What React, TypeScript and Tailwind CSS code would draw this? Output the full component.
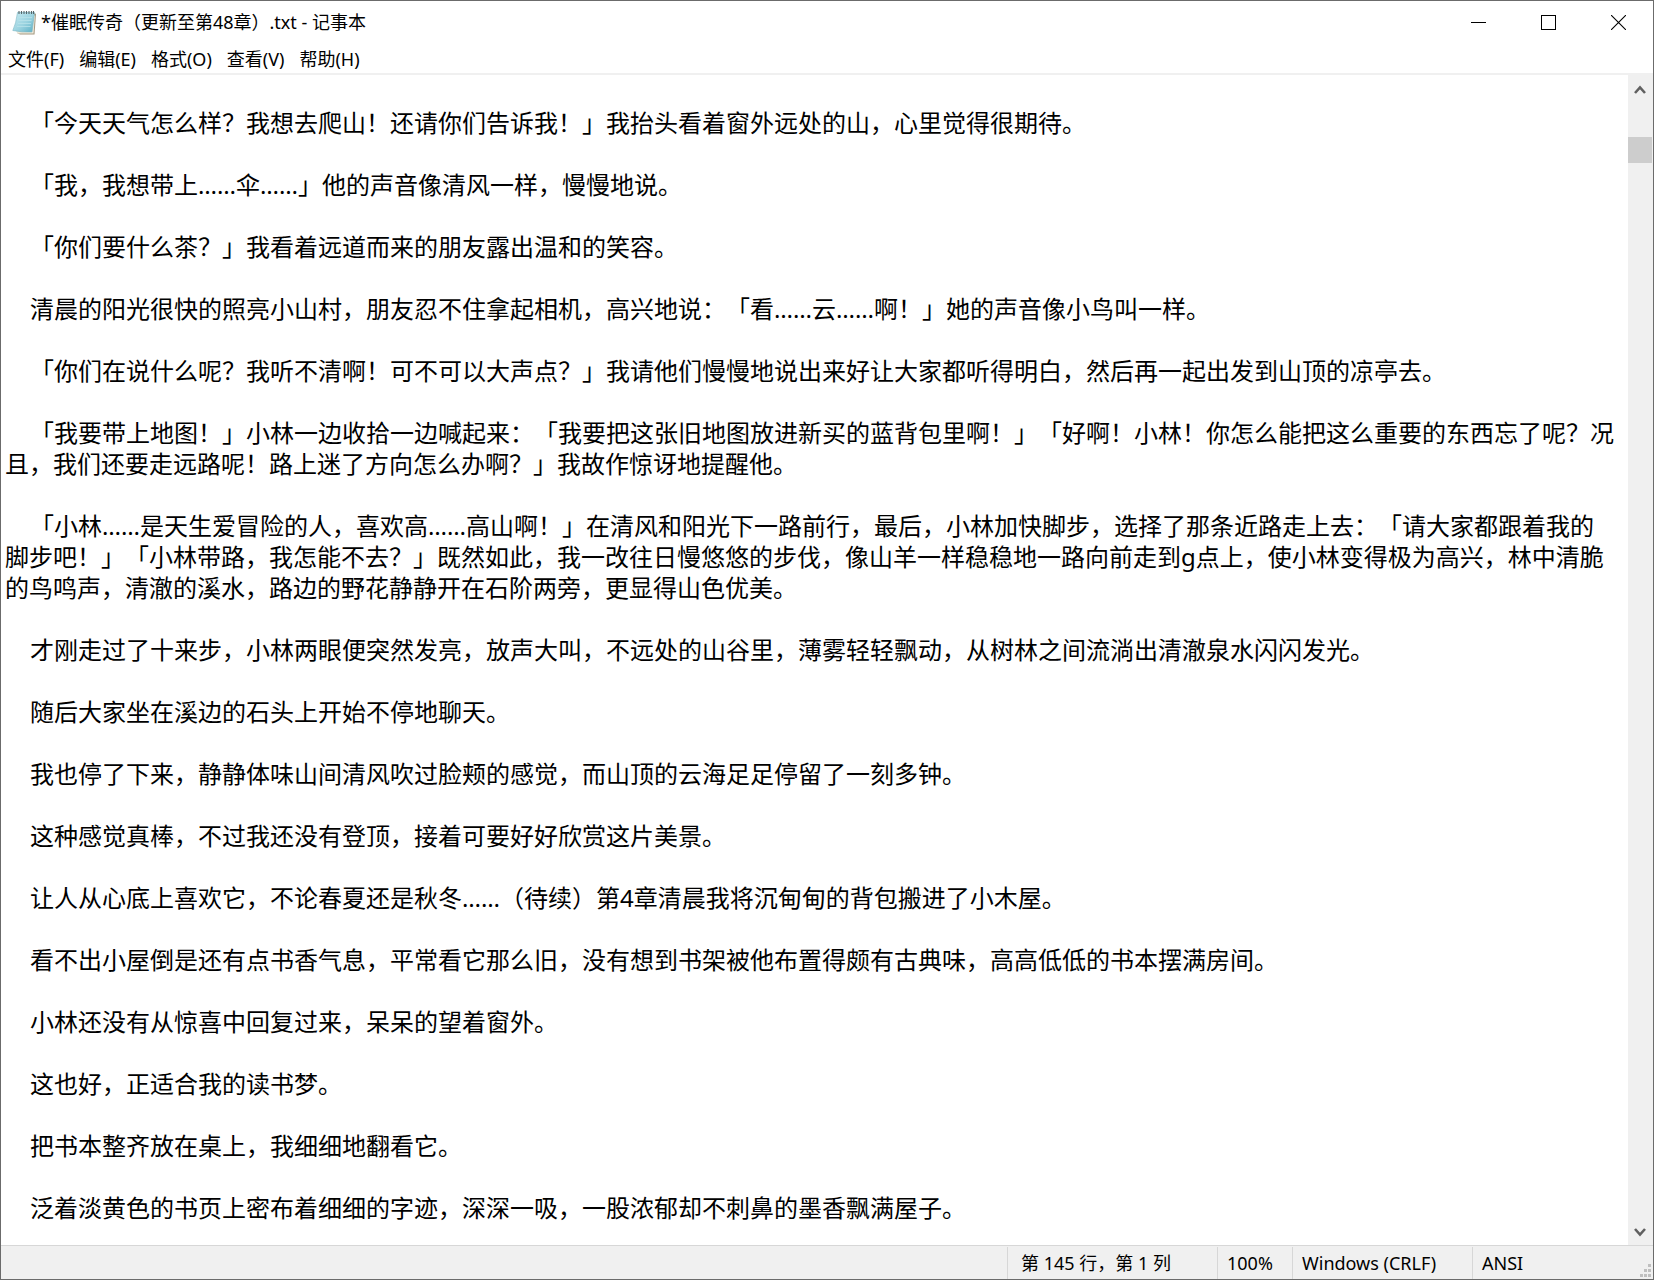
import React from "react";

const paragraphs = [
  "「今天天气怎么样？我想去爬山！还请你们告诉我！」我抬头看着窗外远处的山，心里觉得很期待。",
  "「我，我想带上……伞……」他的声音像清风一样，慢慢地说。",
  "「你们要什么茶？」我看着远道而来的朋友露出温和的笑容。",
  "清晨的阳光很快的照亮小山村，朋友忍不住拿起相机，高兴地说：「看……云……啊！」她的声音像小鸟叫一样。",
  "「你们在说什么呢？我听不清啊！可不可以大声点？」我请他们慢慢地说出来好让大家都听得明白，然后再一起出发到山顶的凉亭去。",
  "「我要带上地图！」小林一边收拾一边喊起来：「我要把这张旧地图放进新买的蓝背包里啊！」「好啊！小林！你怎么能把这么重要的东西忘了呢？况且，我们还要走远路呢！路上迷了方向怎么办啊？」我故作惊讶地提醒他。",
  "「小林……是天生爱冒险的人，喜欢高……高山啊！」在清风和阳光下一路前行，最后，小林加快脚步，选择了那条近路走上去：「请大家都跟着我的脚步吧！」「小林带路，我怎能不去？」既然如此，我一改往日慢悠悠的步伐，像山羊一样稳稳地一路向前走到g点上，使小林变得极为高兴，林中清脆的鸟鸣声，清澈的溪水，路边的野花静静开在石阶两旁，更显得山色优美。",
  "才刚走过了十来步，小林两眼便突然发亮，放声大叫，不远处的山谷里，薄雾轻轻飘动，从树林之间流淌出清澈泉水闪闪发光。",
  "随后大家坐在溪边的石头上开始不停地聊天。",
  "我也停了下来，静静体味山间清风吹过脸颊的感觉，而山顶的云海足足停留了一刻多钟。",
  "这种感觉真棒，不过我还没有登顶，接着可要好好欣赏这片美景。",
  "让人从心底上喜欢它，不论春夏还是秋冬……（待续）第4章清晨我将沉甸甸的背包搬进了小木屋。",
  "看不出小屋倒是还有点书香气息，平常看它那么旧，没有想到书架被他布置得颇有古典味，高高低低的书本摆满房间。",
  "小林还没有从惊喜中回复过来，呆呆的望着窗外。",
  "这也好，正适合我的读书梦。",
  "把书本整齐放在桌上，我细细地翻看它。",
  "泛着淡黄色的书页上密布着细细的字迹，深深一吸，一股浓郁却不刺鼻的墨香飘满屋子。",
];

const documentText = "\n" + paragraphs.map((p) => "    " + p).join("\n\n");

const menus = ["文件(F)", "编辑(E)", "格式(O)", "查看(V)", "帮助(H)"];

function NotepadIcon() {
  return (
    <svg width="25" height="26" viewBox="0 0 25 26" aria-hidden="true">
      <defs>
        <linearGradient id="cover" x1="0" y1="0" x2="1" y2="1">
          <stop offset="0" stopColor="#c9ebf2" />
          <stop offset="0.55" stopColor="#9bd3e0" />
          <stop offset="1" stopColor="#5aaec4" />
        </linearGradient>
      </defs>
      <path d="M5 23 L8 24.5 H22.5 L24 4 L22.5 3 Z" fill="#a59a83" />
      <path d="M4 21.5 L6 23.5 H21.5 L23 5 Z" fill="#efe9da" />
      <path d="M5.5 2.5 H22.5 L20 22 Q10 22.5 0.8 20.5 Q4 14 5.5 2.5 Z" fill="url(#cover)" stroke="#78b5c3" strokeWidth="0.6" />
      <path d="M7 7.5H20M6.5 10.5H19.5M6 13.5H19M5 16.5H18.5" stroke="#b9e2ea" strokeWidth="0.8" />
      <path d="M7 1V4M9.5 1V4M12 1V4M14.500 1V4M17 1V4M19.500 1V4M21.500 1V4" stroke="#56666b" strokeWidth="1.1" />
    </svg>
  );
}

export default function App() {
  return (
    <div
      lang="zh-CN"
      className="flex h-screen flex-col overflow-hidden border border-[#6b6b6b] bg-white font-['Noto_Sans','Noto_Sans_CJK_SC',sans-serif] text-black [text-spacing-trim:space-all]"
    >
      <header className="flex h-[43px] shrink-0 items-center">
        <div className="flex min-w-0 flex-1 items-center gap-1 pl-[11px]">
          <NotepadIcon />
          <h1 className="truncate pb-px text-[18px] leading-6">*催眠传奇（更新至第48章）.txt - 记事本</h1>
        </div>
        <div className="flex h-full shrink-0">
          <button aria-label="最小化" className="flex w-[70px] items-center justify-center">
            <svg width="15" height="15" viewBox="0 0 15 15" shapeRendering="crispEdges">
              <path d="M0 7.500H15" stroke="black" />
            </svg>
          </button>
          <button aria-label="最大化" className="flex w-[70px] items-center justify-center">
            <svg width="15" height="15" viewBox="0 0 15 15" shapeRendering="crispEdges">
              <rect x="0.500" y="0.500" width="14" height="14" fill="none" stroke="black" />
            </svg>
          </button>
          <button aria-label="关闭" className="flex w-[70px] items-center justify-center">
            <svg width="15" height="15" viewBox="0 0 15 15">
              <path d="M0 0L15 15M15 0L0 15" stroke="black" strokeWidth="1.1" />
            </svg>
          </button>
        </div>
      </header>

      <nav className="flex h-[31px] shrink-0 items-center gap-[15px] border-b-2 border-[#f0f0f0] pl-[7px]">
        {menus.map((m) => (
          <button key={m} className="text-[18px] leading-6">
            {m}
          </button>
        ))}
      </nav>

      <main className="flex min-h-0 flex-1">
        <textarea
          aria-label="文本编辑器"
          spellCheck={false}
          defaultValue={documentText}
          className="min-w-0 flex-1 resize-none overflow-hidden border-0 bg-white pt-px pr-3 pl-1 text-[24px] leading-[31px] outline-none [text-spacing-trim:space-all]"
        />
        <div className="flex w-[25px] shrink-0 flex-col bg-[#f0f0f0]">
          <button aria-label="向上滚动" className="flex h-[30px] w-6 items-center justify-center">
            <svg width="12" height="10" viewBox="0 0 12 10">
              <path d="M1 8L6 2.500L11 8" fill="none" stroke="#606060" strokeWidth="2.600" />
            </svg>
          </button>
          <div className="flex-1 pt-8">
            <div className="h-[26px] w-6 bg-[#cdcdcd]" />
          </div>
          <button aria-label="向下滚动" className="flex h-[26px] w-6 items-center justify-center">
            <svg width="12" height="10" viewBox="0 0 12 10">
              <path d="M1 2L6 7.500L11 2" fill="none" stroke="#606060" strokeWidth="2.600" />
            </svg>
          </button>
        </div>
      </main>

      <footer className="flex h-[34px] shrink-0 justify-end border-t border-[#d7d7d7] bg-[#f0f0f0] pt-px text-[18px] leading-8">
        <div className="w-[210px] border-l border-[#d7d7d7] pl-[13px]">第 145 行，第 1 列</div>
        <div className="w-[75px] border-l border-[#d7d7d7] pl-[9px]">100%</div>
        <div className="w-[180px] border-l border-[#d7d7d7] pl-[9px]">Windows (CRLF)</div>
        <div className="flex w-[181px] items-end justify-between border-l border-[#d7d7d7] pl-[9px]">
          <span>ANSI</span>
          <svg width="13" height="15" viewBox="0 0 13 15" fill="#bfbfbf" aria-hidden="true">
            <path d="M8 0h3v3h-3zM4 5h3v3h-3zM8 5h3v3h-3zM0 10h3v3h-3zM4 10h3v3h-3zM8 10h3v3h-3z" />
          </svg>
        </div>
      </footer>
    </div>
  );
}
